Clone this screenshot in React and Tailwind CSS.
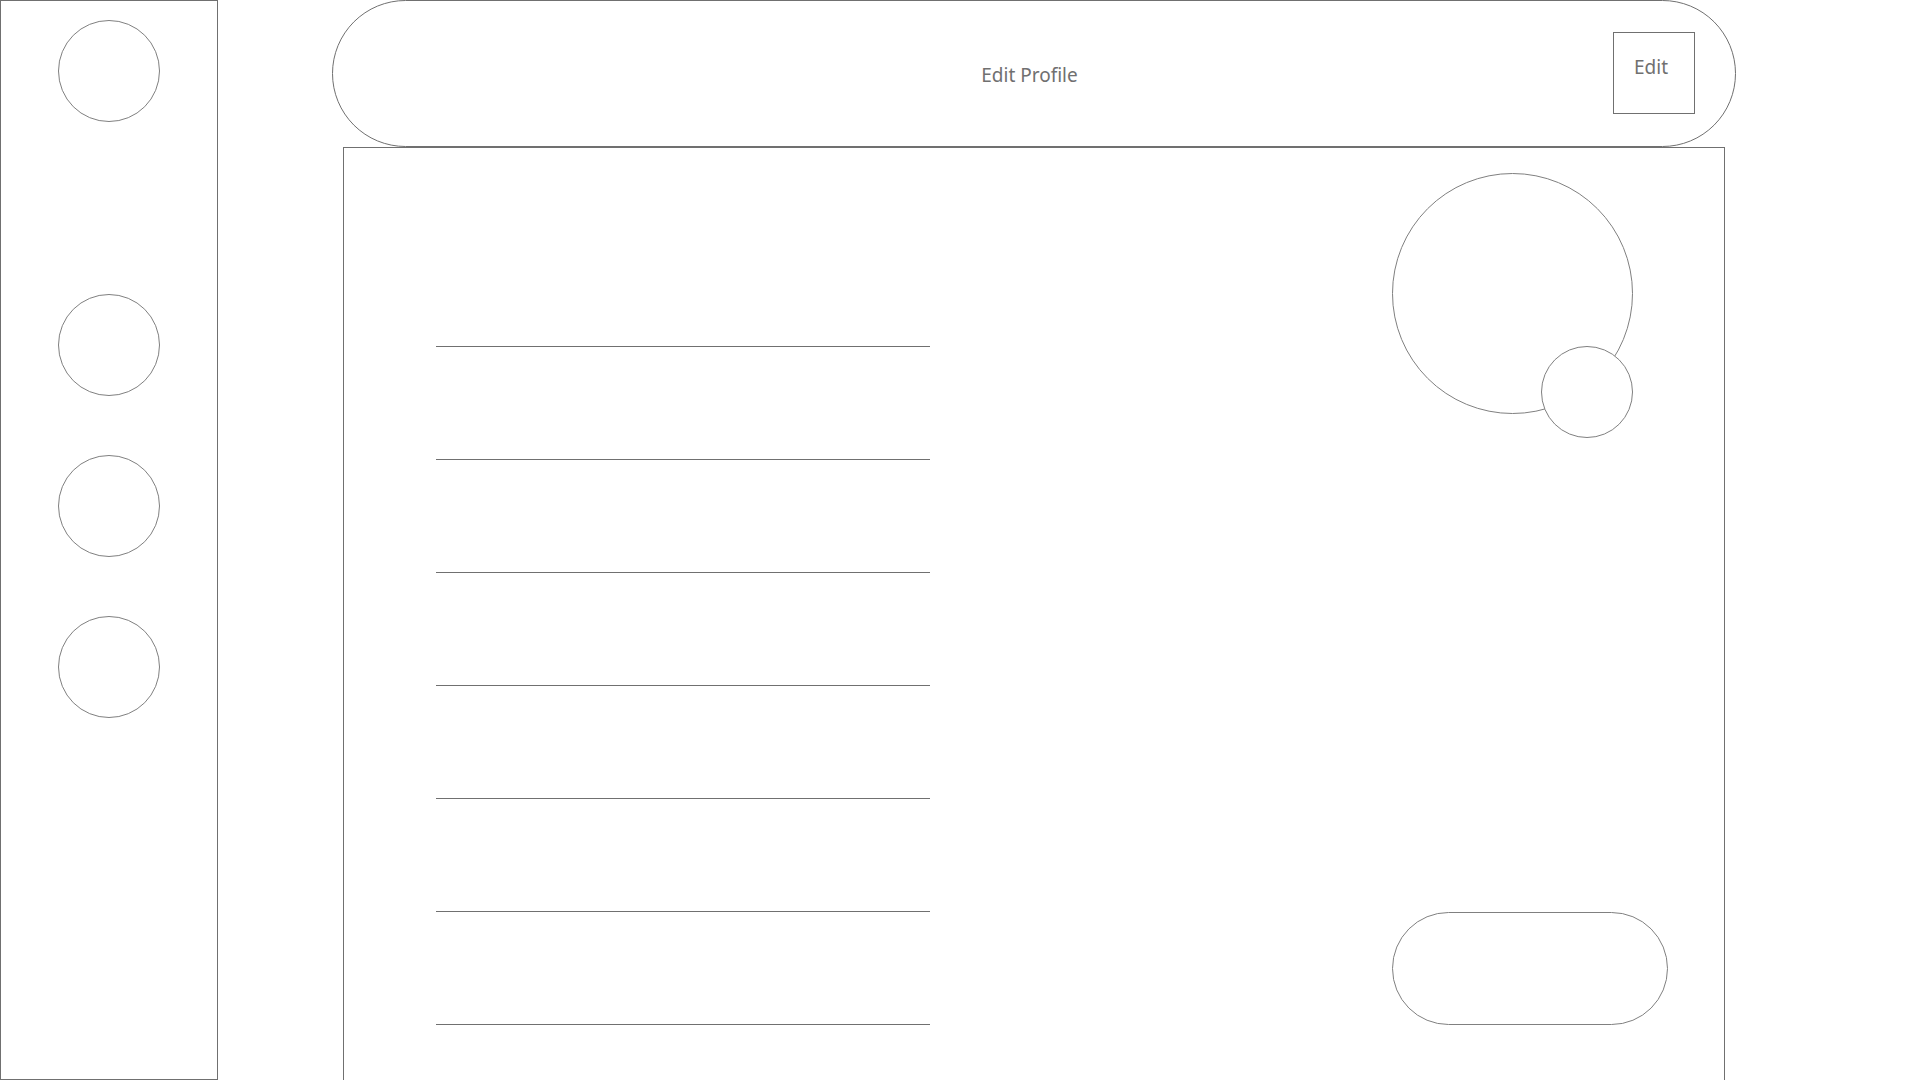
import React from 'react';

const line = 'border-[#707070]';

function NavDot({ className = '' }) {
  return <div className={`w-[102px] h-[102px] rounded-full border border-[#808080] shrink-0 ${className}`} />;
}

function App() {
  const fields = [0, 1, 2, 3, 4, 5, 6];

  return (
    <div className="flex w-screen h-screen overflow-hidden bg-white text-[#707070]" style={{ fontFamily: '"Noto Sans", "Open Sans", sans-serif' }}>
      {/* sidebar */}
      <aside className={`w-[218px] h-full shrink-0 border ${line} flex flex-col items-center pt-[19px]`}>
        <NavDot />
        <NavDot className="mt-[172px]" />
        <NavDot className="mt-[59px]" />
        <NavDot className="mt-[59px]" />
      </aside>

      <div className="ml-[114px] w-[1404px] shrink-0 flex flex-col">
        {/* top bar */}
        <header className={`h-[147px] shrink-0 rounded-full border ${line} grid grid-cols-[1fr_auto_1fr] items-center`}>
          <div />
          <div className="text-[19px] pr-[9px] pt-[3px]">Edit Profile</div>
          <div className="flex justify-end pr-[40px] self-start pt-[31px]">
            <button className={`w-[82px] h-[82px] border ${line} flex justify-center items-start pt-[20px] pr-[6px] text-[19px]`}>
              Edit
            </button>
          </div>
        </header>

        {/* form panel */}
        <main className={`mx-[11px] h-[1000px] shrink-0 border ${line} flex`}>
          <div className="pl-[92px] pt-[198px] flex flex-col gap-[112px]">
            {fields.map((f) => (
              <div key={f} className="w-[494px] h-px bg-[#707070]" />
            ))}
          </div>

          <div className="ml-[462px] pt-[25px] flex flex-col">
            <div className="relative w-[241px] h-[241px]">
              <div className="w-full h-full rounded-full border border-[#808080]" />
              <div className="absolute right-0 top-[173px] w-[92px] h-[92px] rounded-full border border-[#808080] bg-white" />
            </div>
            <button className="mt-[498px] w-[276px] h-[113px] rounded-full border border-[#808080]" />
          </div>
        </main>
      </div>
    </div>
  );
}

export default App;
